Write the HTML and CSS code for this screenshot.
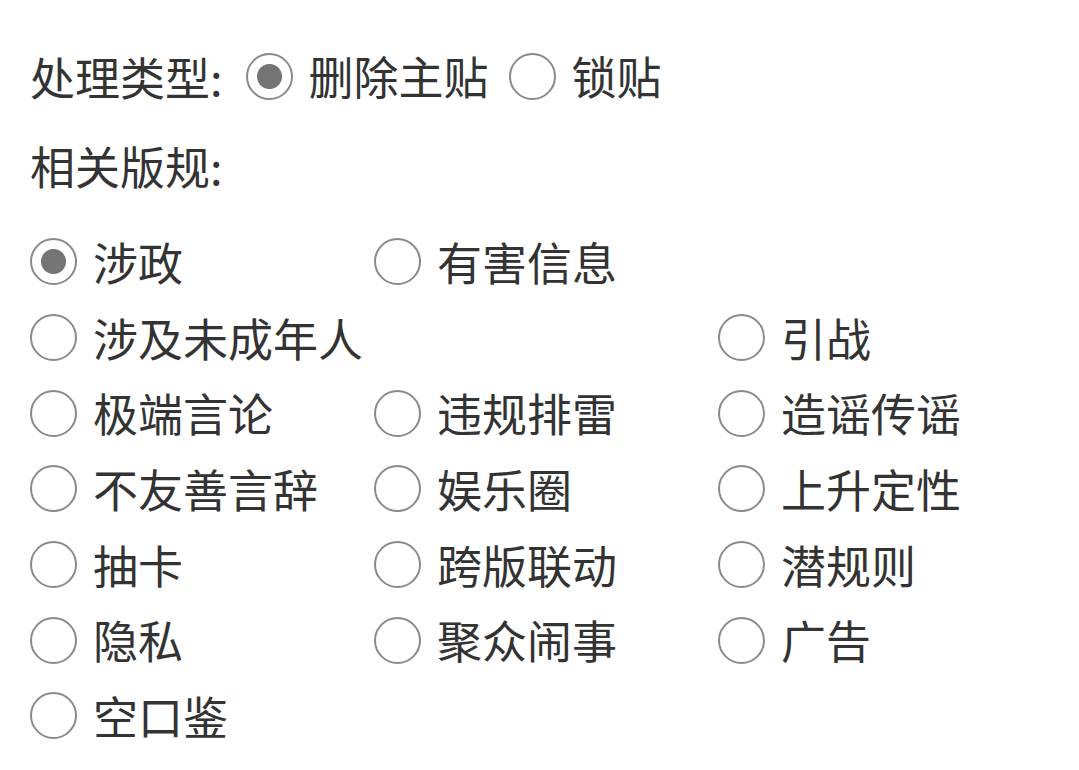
FILE: index.html
```html
<!DOCTYPE html>
<html lang="zh-CN">
<head>
    <meta charset="UTF-8">
    <meta name="viewport" content="width=device-width, initial-scale=1.0">
    <title>处理</title>
    <link rel="stylesheet" href="styles.css">
</head>
<body>

    <form class="handle-form">
        <div class="type-row">
            <span class="label">处理类型:</span>
            <label class="option"><input type="radio" name="type" checked> 删除主贴</label>
            <label class="option"><input type="radio" name="type"> 锁贴</label>
        </div>

        <div class="rules-title">相关版规:</div>

        <div class="rules">
            <label class="option"><input type="radio" name="rule" checked> 涉政</label>
            <label class="option"><input type="radio" name="rule"> 有害信息</label>
            <label class="option wide"><input type="radio" name="rule"> 涉及未成年人</label>
            <label class="option"><input type="radio" name="rule"> 引战</label>
            <label class="option"><input type="radio" name="rule"> 极端言论</label>
            <label class="option"><input type="radio" name="rule"> 违规排雷</label>
            <label class="option"><input type="radio" name="rule"> 造谣传谣</label>
            <label class="option"><input type="radio" name="rule"> 不友善言辞</label>
            <label class="option"><input type="radio" name="rule"> 娱乐圈</label>
            <label class="option"><input type="radio" name="rule"> 上升定性</label>
            <label class="option"><input type="radio" name="rule"> 抽卡</label>
            <label class="option"><input type="radio" name="rule"> 跨版联动</label>
            <label class="option"><input type="radio" name="rule"> 潜规则</label>
            <label class="option"><input type="radio" name="rule"> 隐私</label>
            <label class="option"><input type="radio" name="rule"> 聚众闹事</label>
            <label class="option"><input type="radio" name="rule"> 广告</label>
            <label class="option"><input type="radio" name="rule"> 空口鉴</label>
        </div>
    </form>

</body>
</html>
```

FILE: styles.css
```css
/* Basic styling */
body {
    font-family: "Noto Sans CJK SC", "Noto Sans", sans-serif;
    font-size: 45px;
    color: #333;
    background-color: #fff;
    margin: 0;
    padding: 0;
}
.handle-form {
    padding: 48px 0 0 30px;
}
.type-row {
    display: flex;
    align-items: center;
    height: 56px;
}
.type-row .label {
    margin-right: 23px;
}
.type-row .option {
    margin-right: 20px;
}
.type-row .option input {
    margin-right: 16px;
}
.rules-title {
    margin-top: 34px;
    height: 56px;
    line-height: 56px;
}
.rules {
    display: grid;
    grid-template-columns: repeat(3, 344px);
    grid-auto-rows: 75.7px;
    margin-top: 30px;
}
.option {
    display: flex;
    align-items: center;
    line-height: 56px;
}
.wide {
    grid-column: span 2;
}
/* Radio look */
.option input {
    appearance: none;
    -webkit-appearance: none;
    width: 47px;
    height: 47px;
    margin: 0 16px 0 0;
    border: 2px solid #8a8a8a;
    border-radius: 50%;
    background-color: #fff;
    flex-shrink: 0;
    box-sizing: border-box;
}
.option input:checked {
    background: radial-gradient(circle, #747474 0, #747474 12px, #fff 13px);
}
```
